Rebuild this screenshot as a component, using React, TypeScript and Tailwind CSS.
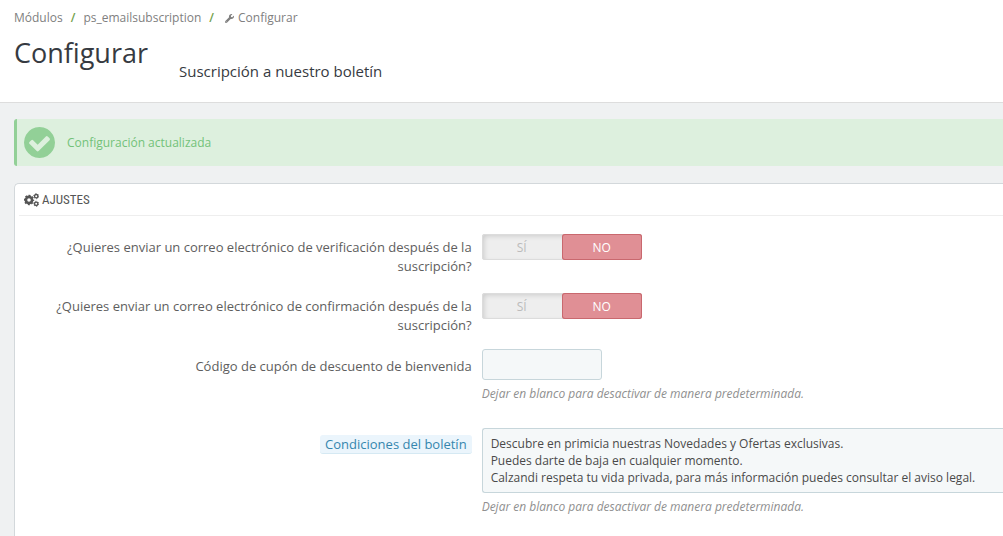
import { useState } from "react";
import type { ReactNode } from "react";
import { FaWrench } from "react-icons/fa";

const conditions = `Descubre en primicia nuestras Novedades y Ofertas exclusivas.
Puedes darte de baja en cualquier momento.
Calzandi respeta tu vida privada, para más información puedes consultar el aviso legal.`;

function CheckCircleIcon() {
  return (
    <svg viewBox="128 128 1536 1536" className="size-[31px] text-[#92d097]" fill="currentColor" aria-hidden="true">
      <path d="M1412 734q0-28-18-46l-91-90q-19-19-45-19t-45 19l-408 407-226-226q-19-19-45-19t-45 19l-91 90q-18 18-18 46 0 27 18 45l362 362q19 19 45 19 27 0 46-19l543-543q18-18 18-45zm252 162q0 209-103 385.5t-279.5 279.5-385.5 103-385.5-103-279.5-279.5-103-385.5 103-385.5 279.5-279.5 385.5-103 385.5 103 279.5 279.5 103 385.5z" />
    </svg>
  );
}

function CogsIcon() {
  return (
    <svg viewBox="0 0 15 14" className="h-[14px] w-[15px]" fill="none" stroke="currentColor" aria-hidden="true">
      <circle cx="5" cy="7" r="3.1" strokeWidth="2.6" />
      <circle cx="5" cy="7" r="4.4" strokeWidth="1.6" strokeDasharray="1.9 1.556" strokeDashoffset="0.95" />
      <circle cx="12.2" cy="3.2" r="1.7" strokeWidth="1.4" />
      <circle cx="12.2" cy="3.2" r="2.5" strokeWidth="0.9" strokeDasharray="1.31 1.31" />
      <circle cx="12.2" cy="10.8" r="1.7" strokeWidth="1.4" />
      <circle cx="12.2" cy="10.8" r="2.5" strokeWidth="0.9" strokeDasharray="1.31 1.31" />
    </svg>
  );
}

function Row({ label, children }: { label: ReactNode; children: ReactNode }) {
  return (
    <div className="grid grid-cols-[46%_1fr] gap-[10px]">
      <div className="pt-1 text-right leading-[19px]">{label}</div>
      <div>{children}</div>
    </div>
  );
}

function Switch({ name, label }: { name: string; label: string }) {
  const [on, setOn] = useState(false);

  return (
    <Row label={<span id={`${name}-label`}>{label}</span>}>
      <div
        role="radiogroup"
        aria-labelledby={`${name}-label`}
        className="relative flex h-[26px] w-40 rounded-[3px] bg-[#eeeeee] text-center text-xs leading-[27px] shadow-[inset_0_0_0_1px_#dcdcdc,inset_2px_2px_5px_rgba(0,0,0,0.15)]"
      >
        <label className="w-20 cursor-pointer rounded-[3px] text-[#bbbbbb] has-checked:bg-[#92d097] has-checked:text-white has-checked:shadow-[inset_0_0_0_1px_#72c279]">
          <input type="radio" name={name} checked={on} onChange={() => setOn(true)} className="sr-only" />
          SÍ
        </label>
        <label className="w-20 cursor-pointer rounded-[3px] text-[#bbbbbb] has-checked:bg-[#e08f95] has-checked:text-white has-checked:shadow-[inset_0_0_0_1px_#c9686e]">
          <input type="radio" name={name} checked={!on} onChange={() => setOn(false)} className="sr-only" />
          NO
        </label>
      </div>
    </Row>
  );
}

function Help({ id }: { id: string }) {
  return (
    <p id={id} className="mt-[5px] text-xs leading-[18px] text-[#909090] italic">
      Dejar en blanco para desactivar de manera predeterminada.
    </p>
  );
}

export default function App() {
  return (
    <div className="min-h-screen overflow-hidden bg-[#eff1f2] font-['Open_Sans',sans-serif] text-[13px] text-[#5e5e5e]">
      <header className="border-b border-[#dddddd] bg-white pt-[9px] pb-5 pl-[14px]">
        <nav aria-label="Ruta" className="flex items-center text-xs leading-[18px] text-[#808080]">
          <a href="#modulos">Módulos</a>
          <span className="px-2 font-semibold text-[#72a14b]">/</span>
          <a href="#ps_emailsubscription">ps_emailsubscription</a>
          <span className="px-2 font-semibold text-[#72a14b]">/</span>
          <a href="#configurar" className="flex items-center gap-1 pl-[3px]">
            <FaWrench className="size-[9px]" />
            Configurar
          </a>
        </nav>
        <div className="flex items-end gap-[31px]">
          <h1 className="mb-1 text-[27px] leading-[51px] text-[#363a41]">Configurar</h1>
          <h2 className="text-[15px] leading-[21px] text-[#363a41]">Suscripción a nuestro boletín</h2>
        </div>
      </header>

      <main className="pt-4 pl-[14px]">
        <div
          role="status"
          className="flex h-[47px] items-center gap-3 rounded-l-[3px] border-l-3 border-[#92d097] bg-[#ddf0de] pl-[7px] text-xs text-[#72c279]"
        >
          <CheckCircleIcon />
          Configuración actualizada
        </div>

        <section className="mt-[17px] rounded-tl-[5px] border-t border-l border-[#d3d8db] bg-white pl-1">
          <h3 className="flex h-8 items-center gap-[3px] border-b border-[#eeeeee] pt-px pl-[5px] font-['Ubuntu_Condensed','Roboto_Condensed',sans-serif] text-[13px] text-[#555555]">
            <CogsIcon />
            AJUSTES
          </h3>

          <form className="pt-[18px] pb-8">
            <div className="flex flex-col gap-[17px]">
              <Switch
                name="verification"
                label="¿Quieres enviar un correo electrónico de verificación después de la suscripción?"
              />
              <Switch
                name="confirmation"
                label="¿Quieres enviar un correo electrónico de confirmación después de la suscripción?"
              />
            </div>
            <div className="mt-[14px] flex flex-col gap-[25px]">
              <Row
                label={
                  <label htmlFor="voucher" className="block pt-1">
                    Código de cupón de descuento de bienvenida
                  </label>
                }
              >
                <input
                  id="voucher"
                  type="text"
                  aria-describedby="voucher-help"
                  className="block h-[31px] w-[120px] rounded-[3px] border border-[#c7d6db] bg-[#f5f8f9] px-2 text-xs text-[#555555]"
                />
                <Help id="voucher-help" />
              </Row>
              <Row
                label={
                  <label
                    htmlFor="conditions"
                    className="mt-[3px] inline-block rounded-[3px] border-b border-[#d5e9f3] bg-[#ebf5fc] px-[5px] leading-[18px] text-[#3586ae]"
                  >
                    Condiciones del boletín
                  </label>
                }
              >
                <textarea
                  id="conditions"
                  rows={3}
                  defaultValue={conditions}
                  aria-describedby="conditions-help"
                  className="block h-[65px] w-full resize-none overflow-hidden rounded-l-[3px] border border-r-0 border-[#c7d6db] bg-[#f5f8f9] px-2 py-[6px] text-xs leading-[17px] text-[#4a4a4a]"
                />
                <Help id="conditions-help" />
              </Row>
            </div>
          </form>
        </section>
      </main>
    </div>
  );
}
